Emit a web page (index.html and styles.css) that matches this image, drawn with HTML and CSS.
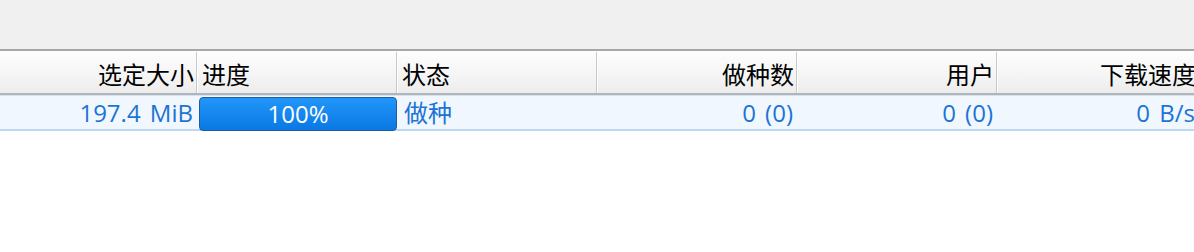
FILE: index.html
```html
<!DOCTYPE html>
<html lang="zh">
<head>
<meta charset="utf-8">
<link rel="stylesheet" href="styles.css">
</head>
<body>
<div class="toolbar"></div>
<div class="table">
  <div class="header">
    <div class="hcell right first">选定大小</div>
    <div class="hcell">进度</div>
    <div class="hcell">状态</div>
    <div class="hcell right">做种数</div>
    <div class="hcell right">用户</div>
    <div class="hcell right last">下载速度</div>
  </div>
  <div class="row">
    <div class="cell right">197.4 MiB</div>
    <div class="cell progress-cell"><div class="bar">100%</div></div>
    <div class="cell left">做种</div>
    <div class="cell right">0 (0)</div>
    <div class="cell right">0 (0)</div>
    <div class="cell right">0 B/s</div>
  </div>
</div>
</body>
</html>
```
FILE: styles.css
```css
html, body {
  margin: 0;
  padding: 0;
  background: #ffffff;
  width: 1194px;
  height: 252px;
  overflow: hidden;
  font-family: "Open Sans", "Noto Sans CJK SC", sans-serif;
  font-size: 24px;
}
.toolbar {
  height: 49px;
  background: #f0f0f0;
}
.table {
  border-top: 2px solid #a7a7a7;
  width: 1200px;
}
.header {
  display: grid;
  grid-template-columns: 198px 200px 200px 200px 200px 202px;
  background: linear-gradient(#fdfdfd, #f6f6f6 50%, #ececec);
  border-top: 1px solid #ffffff;
  border-bottom: 2px solid #b4b4b4;
  box-sizing: border-box;
  height: 44px;
}
.hcell {
  color: #000;
  line-height: 41px;
  padding: 2px 5px 0 4px;
  border-right: 1px solid #ffffff;
  box-shadow: inset -1px 0 0 #c9c9c9;
  white-space: nowrap;
  overflow: hidden;
}
.hcell.right { text-align: right; padding-right: 3px; }
.row {
  display: grid;
  grid-template-columns: 198px 200px 200px 200px 200px 202px;
  background: #f1f7fe;
  border-top: 1px solid #cfe3f8;
  border-bottom: 2px solid #bcd8f4;
  height: 36px;
  box-sizing: border-box;
}
.cell {
  color: #1c74d4;
  line-height: 33px;
  padding: 0 5px;
  white-space: nowrap;
  overflow: visible;
  word-spacing: 3px;
}
.cell.right { text-align: right; }
.cell.left { padding-left: 6px; }
.progress-cell {
  padding: 1px 1px 0 1px;
  overflow: visible;
}
.bar {
  height: 34px;
  box-sizing: border-box;
  border: 1px solid #1f5d9d;
  border-radius: 4px;
  background: linear-gradient(#2196f9, #0a78e4);
  color: #ffffff;
  text-align: center;
  line-height: 31px;
  position: relative;
}
```
